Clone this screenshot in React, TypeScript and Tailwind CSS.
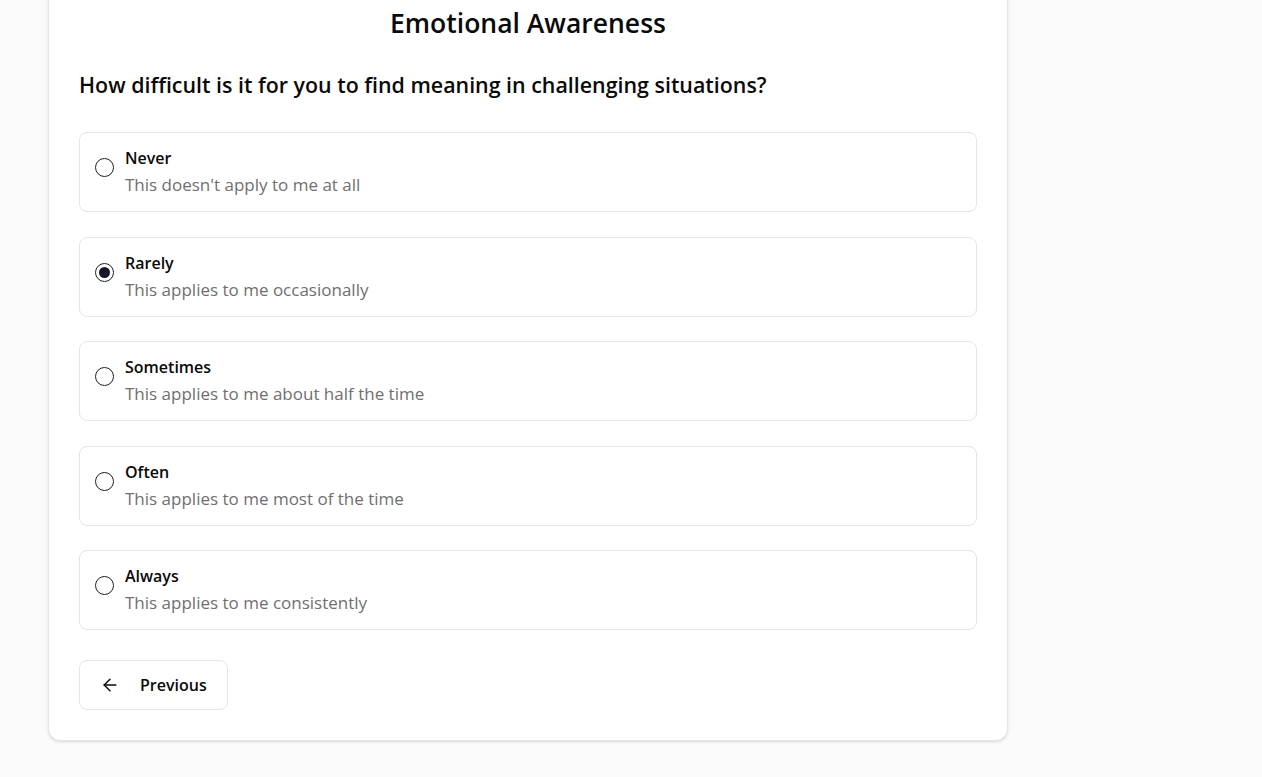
import { useState } from "react";
import { ArrowLeft } from "lucide-react";

const options = [
  { value: "never", label: "Never", hint: "This doesn't apply to me at all" },
  { value: "rarely", label: "Rarely", hint: "This applies to me occasionally" },
  { value: "sometimes", label: "Sometimes", hint: "This applies to me about half the time" },
  { value: "often", label: "Often", hint: "This applies to me most of the time" },
  { value: "always", label: "Always", hint: "This applies to me consistently" },
];

const App = () => {
  const [answer, setAnswer] = useState("rarely");

  return (
    <div
      className="min-h-screen bg-[#fafafa] pl-12 pb-[37px] overflow-hidden"
      style={{ fontFamily: '"Open Sans", "Noto Sans", sans-serif' }}
    >
      <div className="w-[960px] -mt-[20px] bg-white border border-[#e5e5e5] rounded-xl shadow-sm px-[30px] pt-[24px] pb-[30px]">
        <h1 className="text-[26.5px] leading-[36px] font-semibold text-[#0a0a0a] text-center">
          Emotional Awareness
        </h1>

        <h2 className="mt-[30px] text-[21.4px] leading-7 font-semibold text-[#0a0a0a]">
          How difficult is it for you to find meaning in challenging situations?
        </h2>

        {/* lista de respostas */}
        <div className="mt-[33px] flex flex-col gap-[24.5px]">
          {options.map((option) => {
            const checked = answer === option.value;
            return (
              <label
                key={option.value}
                onClick={() => setAnswer(option.value)}
                className="flex items-start gap-[11px] border border-[#e5e5e5] rounded-lg px-[15px] py-[14px] cursor-pointer bg-white"
              >
                <span className="mt-[11px] w-[19px] h-[19px] shrink-0 rounded-full border-[1.5px] border-[#1f1f1f] flex items-center justify-center">
                  {checked && (
                    <span className="w-[11px] h-[11px] rounded-full bg-[#17172b]" />
                  )}
                </span>
                <span className="flex flex-col">
                  <span className="-mt-px text-base leading-6 font-semibold text-[#0a0a0a]">
                    {option.label}
                  </span>
                  <span className="mt-[3px] text-[17px] leading-6 text-[#6f6f6f]">
                    {option.hint}
                  </span>
                </span>
              </label>
            );
          })}
        </div>

        <button className="mt-[30px] h-[50px] flex items-center gap-5 px-5 border border-[#e5e5e5] rounded-lg bg-white text-base font-semibold text-[#0a0a0a]">
          <ArrowLeft size={20} strokeWidth={1.75} />
          Previous
        </button>
      </div>
    </div>
  );
};

export default App;
